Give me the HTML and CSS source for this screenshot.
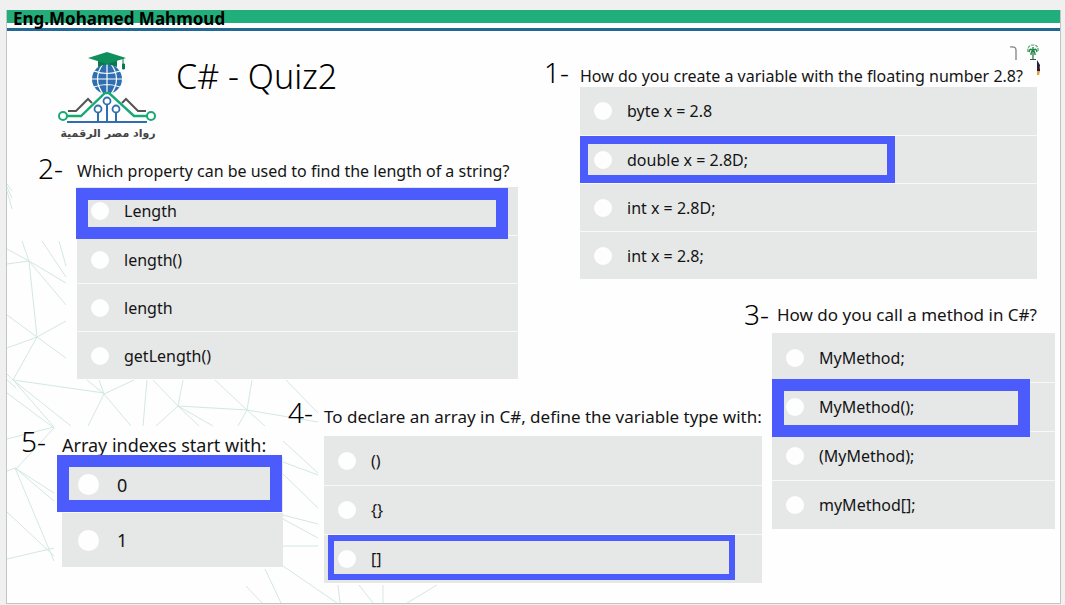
FILE: index.html
```html
<!DOCTYPE html>
<html lang="en">
<head>
<meta charset="utf-8">
<title>C# - Quiz2</title>
<link rel="stylesheet" href="styles.css">
</head>
<body>
<main class="slide">
  <svg class="mesh" viewBox="7 180 330 424" aria-hidden="true">
    <path d="M7 185l5 7M7 188l5 11M7 192l5 18M22 242l7 20M42 242l24 36M59 242l7 25M7 250l22 12l37 22M7 265l22-3l37 44M29 262l8 76M7 316l30 22l29 21M7 349l30-11l29-16M37 338l-24 43M7 375l6 6l91 13M13 381l58 46M15 383l39 45M7 381l9 8M7 394l47 35l-39 42M7 440l47-12M87 381l17 14l30-14M99 381l5 14l-16 32M104 395l27 32M147 381l-4 46M153 381l25 26l5-26M178 407l-22 20M178 407l21 20M178 407l35 20M178 407l69 4M215 381l32 30l5-30M247 411l-9 16M247 411l18 16M247 411l71 12M286 381l32 33M7 472l8-3l39 25M15 469l39 33M15 469l39 93M7 513l47 44M7 560l47-11M283 442l35 32M283 463l35 13M283 475l35 34M283 516l35 9M283 520l35 19M283 547l35 0M283 567l54 37M265 570l16 34M246 587l16 17M338 586l2 18M359 586l14 18M383 586v18M437 586l-30 18"/>
  </svg>

  <header class="topbar"><p class="author">Eng.Mohamed Mahmoud</p></header>

  <div class="board">
    <div class="brand">
      <div class="logo">
        <svg viewBox="0 0 100 74" class="logo-mark" aria-hidden="true">
          <circle cx="49" cy="28" r="15" fill="#2f6fb0"/>
          <path d="M34 28h30M36 20q13 5 26 0M36 36q13-5 26 0M49 13v30M45 13q-11 15 0 30M53 13q11 15 0 30" fill="none" stroke="#fff" stroke-width="1.2"/>
          <path d="M40 7h19v9q-10-5-19 0z" fill="#087a52"/>
          <path d="M30 7l19-6l19 6l-19 6z" fill="#0f8f5c"/>
          <path d="M65 7v6M64.500 13h2v5h-2z" fill="#087a52" stroke="#087a52"/>
          <path d="M10 60h8l12-12l4 4M88 60h-8L68 48l-4 4" fill="none" stroke="#555" stroke-width="2"/>
          <path d="M9 65h14l24-23h4l25 23h13" fill="none" stroke="#19a974" stroke-width="2.400"/>
          <circle cx="5" cy="65" r="4" fill="#fff" stroke="#19a974" stroke-width="2"/>
          <circle cx="93" cy="65" r="4" fill="#fff" stroke="#19a974" stroke-width="2"/>
          <path d="M9 71h80M49 54v17M40 61v10M58 61v10" stroke="#2f6fb0" stroke-width="2"/>
          <g fill="#fff" stroke="#2f6fb0" stroke-width="1.800"><circle cx="49" cy="50" r="3.500"/><circle cx="40" cy="58" r="3.500"/><circle cx="58" cy="58" r="3.500"/></g>
        </svg>
        <p class="logo-name" lang="ar" dir="rtl">رواد مصر الرقمية</p>
      </div>
      <h1 class="title">C# - Quiz2</h1>
    </div>

    <svg class="emblem" viewBox="0 0 34 36" aria-hidden="true">
      <path d="M2 4q6-1 6 3v10" fill="none" stroke="#777" stroke-width="1.200"/>
      <path d="M20 9q-1-7 5-7t5 7" fill="none" stroke="#58a06c" stroke-width="1.200" stroke-dasharray="3 1"/>
      <path d="M25 8q-3-4-4 1M25 8q3-4 4 1M25 8q-2 0-2 4M25 8q2 0 2 4M25 4v5" fill="none" stroke="#1f8a48" stroke-width="1.400"/>
      <path d="M25 8v8" stroke="#4a7a55" stroke-width="1.400"/>
      <path d="M22 16.500h6" stroke="#3a5a48" stroke-width="1"/>
      <path d="M29 17l3 5v6h-3z" fill="#222044"/>
      <path d="M31 23h1v3h-1z" fill="#a02c3a"/>
      <path d="M29 28h3l-1 4h-2z" fill="#e0a032"/>
    </svg>

    <section class="question q1">
      <div class="ask"><span class="number">1-</span><h2 id="t1" class="prompt">How do you create a variable with the floating number 2.8?</h2></div>
      <div class="options" role="radiogroup" aria-labelledby="t1">
        <label class="option"><input type="radio" name="q1">byte x = 2.8</label>
        <label class="option answer"><input type="radio" name="q1">double x = 2.8D;</label>
        <label class="option"><input type="radio" name="q1">int x = 2.8D;</label>
        <label class="option"><input type="radio" name="q1">int x = 2.8;</label>
      </div>
    </section>

    <section class="question q2">
      <div class="ask"><span class="number">2-</span><h2 id="t2" class="prompt">Which property can be used to find the length of a string?</h2></div>
      <div class="options" role="radiogroup" aria-labelledby="t2">
        <label class="option answer"><input type="radio" name="q2">Length</label>
        <label class="option"><input type="radio" name="q2">length()</label>
        <label class="option"><input type="radio" name="q2">length</label>
        <label class="option"><input type="radio" name="q2">getLength()</label>
      </div>
    </section>

    <section class="question q3">
      <div class="ask"><span class="number">3-</span><h2 id="t3" class="prompt">How do you call a method in C#?</h2></div>
      <div class="options" role="radiogroup" aria-labelledby="t3">
        <label class="option"><input type="radio" name="q3">MyMethod;</label>
        <label class="option answer"><input type="radio" name="q3">MyMethod();</label>
        <label class="option"><input type="radio" name="q3">(MyMethod);</label>
        <label class="option"><input type="radio" name="q3">myMethod[];</label>
      </div>
    </section>

    <section class="question q4">
      <div class="ask"><span class="number">4-</span><h2 id="t4" class="prompt">To declare an array in C#, define the variable type with:</h2></div>
      <div class="options" role="radiogroup" aria-labelledby="t4">
        <label class="option"><input type="radio" name="q4">()</label>
        <label class="option"><input type="radio" name="q4">{}</label>
        <label class="option answer"><input type="radio" name="q4">[]</label>
      </div>
    </section>

    <section class="question q5">
      <div class="ask"><span class="number">5-</span><h2 id="t5" class="prompt">Array indexes start with:</h2></div>
      <div class="options" role="radiogroup" aria-labelledby="t5">
        <label class="option answer"><input type="radio" name="q5">0</label>
        <label class="option"><input type="radio" name="q5">1</label>
      </div>
    </section>
  </div>
</main>
</body>
</html>
```

FILE: styles.css
```css
*, *::after { box-sizing: border-box; }

body {
  margin: 0;
  min-height: 100vh;
  padding: 10px 4px 0 6px;
  display: flex;
  background: #f0f0f0;
  color: #141414;
  font-family: "Noto Sans", "Open Sans", sans-serif;
}

h1, h2, p { margin: 0; font-weight: 400; }

.slide {
  position: relative;
  flex: 1;
  margin-bottom: 1px;
  background: #fefefe;
  border: 1px solid #c4c4c4;
  border-top: 0;
}

.mesh {
  position: absolute;
  left: 0;
  bottom: 0;
  width: 330px;
  height: 424px;
  overflow: visible;
}
.mesh path { fill: none; stroke: #d3e8e0; stroke-width: 1; }

.topbar {
  position: relative;
  height: 21px;
  border-bottom: 3px solid #236892;
  background: linear-gradient(#22ae7b 13px, #fefefe 13px);
}
.author {
  padding-left: 6px;
  color: #000;
  font-size: 17px;
  line-height: 17px;
  font-weight: 700;
}

.board {
  position: relative;
  display: grid;
  grid-template-columns:
    14fr [q5] 17fr [q2] 245fr [q5-end] 5fr [q4] 230fr [q2-end] 26fr [q1] 200fr
    [q3] 18fr [q4-end] 275fr [q1-end] 18fr [q3-end] 5fr;
  grid-template-rows: 27px 96px 146px 98px 29px auto;
  align-items: start;
}

.brand {
  grid-column: q2 / q2-end;
  grid-row: 1 / 3;
  display: flex;
  gap: 18px;
  padding: 20px 0 0 20px;
}
.logo { width: 100px; }
.logo-mark { display: block; width: 100%; }
.logo-name {
  color: #444;
  font-family: "DejaVu Sans", sans-serif;
  font-size: 11px;
  line-height: 18px;
  font-weight: 700;
  text-align: center;
  white-space: nowrap;
}
.title {
  color: #000;
  font-size: 34px;
  line-height: 50px;
  font-weight: 300;
  white-space: nowrap;
}

.emblem {
  grid-column: q1 / -1;
  grid-row: 1 / 3;
  justify-self: end;
  width: 34px;
  margin: 12px 18px 0 0;
}

.question { --indent: 36px; --row: 48px; --dot: 18px; }
.ask { display: flex; height: var(--head); }
.number {
  flex: none;
  width: var(--title-indent, var(--indent));
  color: #000;
  font-size: 28px;
  line-height: 28px;
  font-weight: 350;
}
.prompt {
  padding-top: var(--drop);
  font-size: var(--prompt, 16px);
  line-height: 28px;
  white-space: nowrap;
}

.options { margin-left: var(--indent); background: #e6e8e8; }
.option {
  position: relative;
  display: flex;
  align-items: center;
  gap: 15px;
  height: var(--row);
  padding-left: 14px;
  font-size: 16px;
}
.option + .option { border-top: 1px solid #f8f8f8; }
.option input {
  appearance: none;
  flex: none;
  width: var(--dot);
  height: var(--dot);
  margin: 0;
  border-radius: 50%;
  background: #fefefe;
}
.answer { z-index: 1; }
.answer::after {
  content: "";
  position: absolute;
  inset: var(--over-top) auto var(--over-bottom) var(--over-left);
  width: var(--mark-width);
  border: var(--mark) solid #4c5bfb;
}

.q1 { grid-column: q1 / q1-end; grid-row: 2 / 4; --head: 29px; --drop: 4px; --over-top: 0; --over-bottom: 0; --over-left: 0; --mark-width: 69%; --mark: 8px; }
.q2 { grid-column: q2 / q2-end; grid-row: 3 / 5; --indent: 39px; --head: 33px; --drop: 3px; --over-top: 1px; --over-bottom: -4px; --over-left: -1px; --mark-width: 98%; --mark: 12px; }
.q3 { grid-column: q3 / q3-end; grid-row: 4 / 7; --indent: 28px; --title-indent: 33px; --row: 49px; --head: 33px; --drop: 1px; --prompt: 17px; --over-top: -4px; --over-bottom: -6px; --over-left: 0; --mark-width: 91%; --mark: 12px; }
.q4 { grid-column: q4 / q4-end; grid-row: 5 / 7; --row: 49px; --head: 38px; --drop: 5px; --prompt: 17px; --over-top: 0; --over-bottom: 3px; --over-left: 4px; --mark-width: 93%; --mark: 6px; }
.q5 { grid-column: q5 / q5-end; grid-row: 6 / 7; --indent: 41px; --row: 55px; --head: 30px; --drop: 4px; --dot: 21px; --prompt: 18px; --over-top: -2px; --over-bottom: 0; --over-left: -5px; --mark-width: 102%; --mark: 12px; }
.q5 .option { font-size: 18px; gap: 18px; padding-left: 16px; }
```
